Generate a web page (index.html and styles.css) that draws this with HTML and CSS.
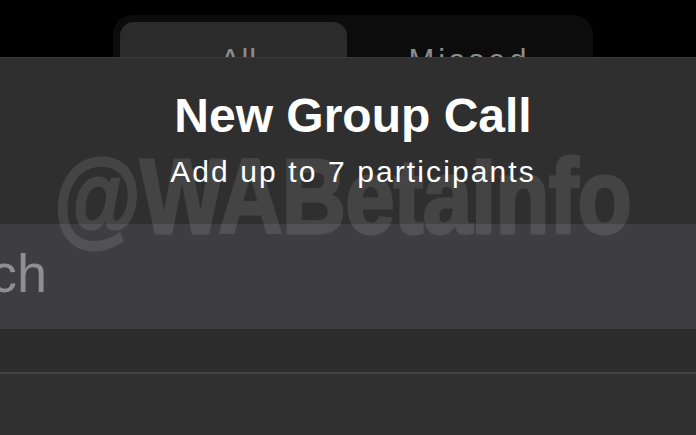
FILE: index.html
```html
<!DOCTYPE html>
<html lang="en">
<head>
    <meta charset="UTF-8">
    <title>New Group Call</title>
    <link rel="stylesheet" href="styles.css">
</head>
<body>
<div class="top">
    <div class="segmented">
        <div class="seg seg-active">All</div>
        <div class="seg seg-wide">Missed</div>
    </div>
</div>
<div class="sheet">
    <div class="header">
        <h1 class="title">New Group Call</h1>
        <p class="subtitle">Add up to 7 participants</p>
    </div>
    <div class="search"><span class="search-text">Search</span></div>
    <div class="band"></div>
    <div class="divider"></div>
    <div class="rows"></div>
    <div class="watermark">@WABetaInfo</div>
</div>
</body>
</html>
```

FILE: styles.css
```css
*{
    padding:0;
    margin:0;
    box-sizing: border-box;
}
html,body{
    width: 696px;
    height: 435px;
    overflow: hidden;
    background-color: #000;
    font-family: "Liberation Sans", Arial, sans-serif;
}
body{
    display: flex;
    flex-direction: column;
}
.top{
    height: 57px;
    overflow: hidden;
    padding: 15px 0 0 113px;
}
.segmented{
    width: 480px;
    height: 80px;
    padding: 7px;
    display: flex;
    background-color: #0c0c0c;
    border-radius: 20px;
}
.seg{
    flex: 1;
    text-align: center;
    font-size: 31px;
    line-height: 50px;
    padding-top: 14px;
    letter-spacing: 1px;
    color: #8c8c8c;
}
.seg-active{
    flex: none;
    width: 227px;
    padding-left: 10px;
    background-color: #2b2b2b;
    border-radius: 14px;
}
.seg-wide{
    letter-spacing: 4px;
    padding-left: 6px;
}
.sheet{
    flex: 1;
    position: relative;
    display: flex;
    flex-direction: column;
    background-color: #2f2f2f;
    border-top: 1px solid #3a3a3a;
}
.header{
    padding-top: 34px;
    height: 166px;
    text-align: center;
    color: #fff;
}
.title{
    font-size: 48px;
    line-height: 48px;
    font-weight: bold;
    padding-left: 10px;
}
.subtitle{
    margin-top: 17px;
    font-size: 30px;
    line-height: 30px;
    letter-spacing: 2.1px;
    padding-left: 10px;
}
.search{
    height: 105px;
    background-color: #3e3e40;
    overflow: hidden;
    white-space: nowrap;
}
.search-text{
    display: block;
    margin-left: -124px;
    font-size: 54px;
    line-height: 99px;
    color: #8e8e93;
}
.band{
    height: 43px;
    background-color: #2c2c2c;
}
.divider{
    height: 2px;
    background-color: #434343;
}
.rows{
    flex: 1;
    background-color: #313131;
}
.watermark{
    position: absolute;
    top: 85px;
    left: 54px;
    font-size: 106px;
    line-height: 106px;
    font-weight: bold;
    letter-spacing: -1px;
    white-space: nowrap;
    color: #fff;
    -webkit-text-stroke: 3px #fff;
    opacity: 0.1;
    transform: scaleX(0.84);
    transform-origin: left top;
    pointer-events: none;
}
```
